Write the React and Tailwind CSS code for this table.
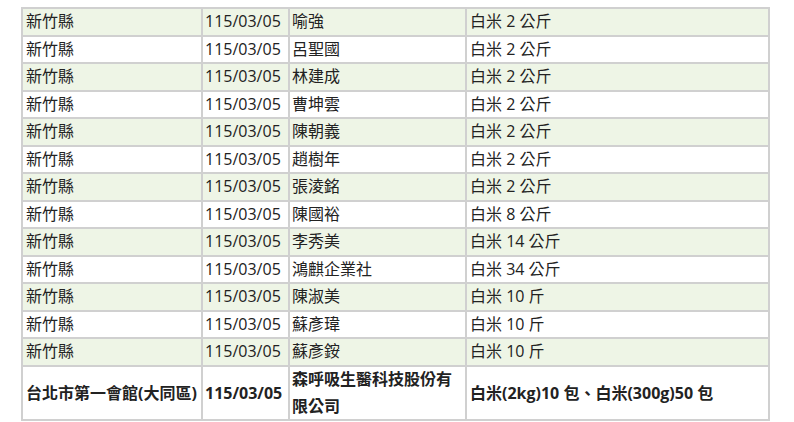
const rows = [
  ["新竹縣", "115/03/05", "喻強", "白米 2 公斤"],
  ["新竹縣", "115/03/05", "呂聖國", "白米 2 公斤"],
  ["新竹縣", "115/03/05", "林建成", "白米 2 公斤"],
  ["新竹縣", "115/03/05", "曹坤雲", "白米 2 公斤"],
  ["新竹縣", "115/03/05", "陳朝義", "白米 2 公斤"],
  ["新竹縣", "115/03/05", "趙樹年", "白米 2 公斤"],
  ["新竹縣", "115/03/05", "張淩銘", "白米 2 公斤"],
  ["新竹縣", "115/03/05", "陳國裕", "白米 8 公斤"],
  ["新竹縣", "115/03/05", "李秀美", "白米 14 公斤"],
  ["新竹縣", "115/03/05", "鴻麒企業社", "白米 34 公斤"],
  ["新竹縣", "115/03/05", "陳淑美", "白米 10 斤"],
  ["新竹縣", "115/03/05", "蘇彥瑋", "白米 10 斤"],
  ["新竹縣", "115/03/05", "蘇彥銨", "白米 10 斤"],
];

// cols 1 and 4 sit a touch further in than the date and name columns
const pads = ["px-[3px]", "px-[2px]", "px-[2px]", "px-[3px]"];

const Cell = ({ children, shade, pad }) => (
  <div
    className={`h-[25.5px] leading-[25.5px] whitespace-nowrap overflow-hidden ${pad} ${
      shade ? "bg-[#eef5e6]" : "bg-white"
    }`}
  >
    {children}
  </div>
);

const App = () => {
  return (
    <div className="bg-white w-[794px] h-[422px] overflow-hidden pt-[7px] pl-[21px]">
      <div
        className="
          w-[749px]
          grid grid-cols-[178px_85px_175px_301px]
          gap-[2px] p-[2px]
          bg-[#d0d0d0]
          text-[16px] text-[#222]
          font-['Open_Sans','Noto_Sans_CJK_TC',sans-serif]
        "
      >
        {rows.map((r, i) =>
          r.map((c, j) => (
            <Cell key={`${i}-${j}`} shade={i % 2 === 0} pad={pads[j]}>
              {c}
            </Cell>
          ))
        )}

        <div className="bg-white h-[52.5px] flex items-center px-[3px] font-bold whitespace-nowrap">
          台北市第一會館(大同區)
        </div>
        <div className="bg-white h-[52.5px] flex items-center px-[2px] font-bold">
          115/03/05
        </div>
        <div className="bg-white h-[52.5px] flex items-center px-[2px] font-bold leading-[27px]">
          森呼吸生醫科技股份有限公司
        </div>
        <div className="bg-white h-[52.5px] flex items-center px-[3px] font-bold">
          白米(2kg)10 包、白米(300g)50 包
        </div>
      </div>
    </div>
  );
};

export default App;
